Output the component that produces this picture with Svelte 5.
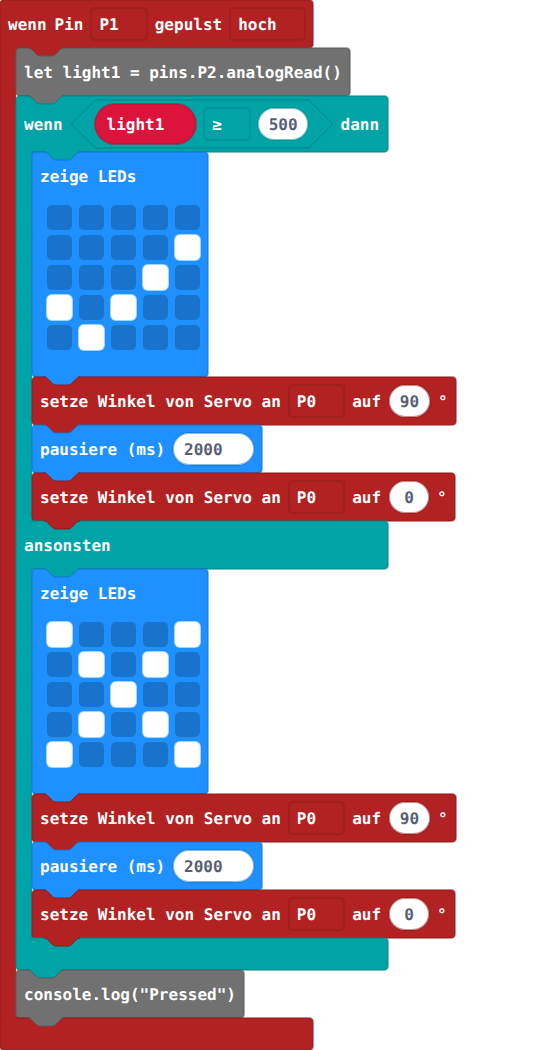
<script>
  const RED = 'red', TEAL = 'teal', BLUE = 'blue', GRAY = 'gray';

  const branch = (leds) => [
    { kind: 'leds', color: BLUE, leds },
    { kind: 'servo', color: RED, angle: '90' },
    { kind: 'pause', color: BLUE, ms: '2000' },
    { kind: 'servo', color: RED, angle: '0' }
  ];

  const yes = branch(['.....', '....#', '...#.', '#.#..', '.#...']);
  const no = branch(['#...#', '.#.#.', '..#..', '.#.#.', '#...#']);
</script>

{#snippet notch(above, own)}
  <svg class="notch above-{above} edge-{own}" width="36" height="9" viewBox="0 0 36 9" aria-hidden="true">
    <path class="cover" d="M2-1H34V1H2Z" />
    <path d="M0 0c2 0 3 1 4 2l4 4c1 1 2 2 4 2h12c2 0 3-1 4-2l4-4c1-1 2-2 4-2" />
  </svg>
{/snippet}

{#snippet stack(items, parent)}
  {#each items as b, i}
    <div class="block {b.color} {b.kind}">
      {@render notch(i ? items[i - 1].color : parent, b.color)}
      {#if b.kind === 'leds'}
        <span class="title">zeige LEDs</span>
        <div class="grid">
          {#each b.leds.join('') as cell}
            <i class:on={cell === '#'}></i>
          {/each}
        </div>
      {:else if b.kind === 'servo'}
        <span>setze Winkel von Servo an</span>
        <span class="field pin">P0</span>
        <span>auf</span>
        <span class="pill" class:single={b.angle.length === 1}>{b.angle}</span>
        <span>°</span>
      {:else}
        <span>pausiere (ms)</span>
        <span class="pill wide">{b.ms}</span>
      {/if}
    </div>
  {/each}
{/snippet}

<main>
  <section class="wrap">
    <div class="block red root head">
      <span>wenn</span>
      <span>Pin</span>
      <span class="field pin">P1</span>
      <span>gepulst</span>
      <span class="field level">hoch</span>
    </div>
    <div class="body red">
      <div class="spine"></div>
      <div class="inner">
        <div class="block gray">
          {@render notch(RED, GRAY)}
          <span>let light1 = pins.P2.analogRead()</span>
        </div>

        <section class="wrap">
          <div class="block teal cond head">
            {@render notch(GRAY, TEAL)}
            <span>wenn</span>
            <div class="hex">
              <svg width="262" height="48" viewBox="0 0 262 48" aria-hidden="true">
                <path d="M.4 24 24.4 0H237.7L261.7 24 237.7 48H24.4Z" />
              </svg>
              <span class="pill var">light1</span>
              <span class="field op">≥</span>
              <span class="pill">500</span>
            </div>
            <span>dann</span>
          </div>
          <div class="body teal">
            <div class="spine"></div>
            <div class="inner">{@render stack(yes, TEAL)}</div>
          </div>
          <div class="block teal mid">
            {@render notch(RED, RED)}
            <span>ansonsten</span>
          </div>
          <div class="body teal">
            <div class="spine"></div>
            <div class="inner">{@render stack(no, TEAL)}</div>
          </div>
          <div class="block teal foot">{@render notch(RED, RED)}</div>
        </section>

        <div class="block gray">
          {@render notch(TEAL, GRAY)}
          <span>console.log("Pressed")</span>
        </div>
      </div>
    </div>
    <div class="block red root foot">{@render notch(GRAY, GRAY)}</div>
  </section>
</main>

<style>
  :global(body) { margin: 0; background: #fff; }

  main {
    width: 560px;
    height: 1050px;
    overflow: hidden;
    color: #fff;
    font: bold 16px/20px "DejaVu Sans Mono", monospace;
    text-rendering: geometricPrecision;
    white-space: pre;
  }

  .red { --fill: #b22222; --line: #8e1b1b; --half: #8e1b1b80; }
  .teal { --fill: #00a4a6; --line: #008385; --half: #00838580; }
  .blue { --fill: #1e90ff; --line: #1873cc; --half: #1873cc80; }
  .gray { --fill: #717171; --line: #5a5a5a; --half: #5a5a5a80; }

  .wrap, .inner { display: flex; flex-direction: column; align-items: flex-start; }
  .body { display: flex; }

  .block {
    position: relative;
    display: flex;
    align-items: center;
    gap: 8px;
    box-sizing: border-box;
    height: 48px;
    padding: 0 8px;
    border-radius: 4px;
    background: var(--fill);
  }
  /* Edges are strokes centred on the outline: half outside, half inside. */
  .block, .field, .pill { box-shadow: 0 0 0 1px var(--half), inset 0 0 0 1px var(--half); }
  .block > span:not(.field, .pill, .title) { padding-top: 2px; }
  .head { border-bottom-left-radius: 0; }
  .root { width: 313px; }
  .cond { width: 372px; height: 56px; }
  .mid { width: 372px; border-top-left-radius: 0; border-bottom-left-radius: 0; }
  .foot { height: 32px; border-top-left-radius: 0; }
  .teal.foot { width: 372px; }

  .spine {
    position: relative;
    width: 16px;
    background: var(--fill);
    box-shadow: -1px 0 0 var(--half), inset 1px 0 0 var(--half);
  }
  .mid::before, .foot::before, .head::after, .mid::after {
    content: "";
    position: absolute;
    left: 1px;
    width: 14px;
    height: 2px;
    background: var(--fill);
  }
  .mid::before, .foot::before { top: -1px; }
  .head::after, .mid::after { bottom: -1px; }
  .inner {
    position: relative;
    background:
      linear-gradient(var(--fill), var(--fill)) 0 0 / 4px 4px no-repeat,
      linear-gradient(var(--fill), var(--fill)) 0 100% / 4px 4px no-repeat;
  }

  .notch { position: absolute; left: 12px; top: 0; z-index: 2; overflow: visible; }
  .mid .notch, .foot .notch { left: 28px; }
  .notch path { fill: var(--above); stroke: var(--edge); stroke-width: 1; }
  .notch .cover { stroke: none; }
  .above-red { --above: #b22222; }
  .above-teal { --above: #00a4a6; }
  .above-blue { --above: #1e90ff; }
  .above-gray { --above: #717171; }
  .edge-red { --edge: #8e1b1b; }
  .edge-teal { --edge: #008385; }
  .edge-blue { --edge: #1873cc; }
  .edge-gray { --edge: #5a5a5a; }

  .field, .pill { box-sizing: border-box; height: 32px; line-height: 34px; }
  .field { padding-left: 8px; border-radius: 4px; }
  .pin { width: 55.3px; }
  .level { width: 74.5px; }
  .op { width: 45.6px; }
  .pill { padding: 0 10.8px; border-radius: 16px; background: #fff; color: #575e75; }
  .single { width: 40px; padding: 0; text-align: center; }
  .wide { width: 80.4px; }
  .var {
    --half: #b0103080;
    width: 101.8px;
    height: 40px;
    padding-left: 12px;
    border-radius: 20px;
    background: #dc143c;
    color: #fff;
    line-height: 42px;
  }

  .hex { position: relative; display: flex; align-items: center; gap: 8px; box-sizing: border-box; width: 262px; height: 48px; padding-left: 24px; }
  .hex svg { position: absolute; left: 0; top: 0; overflow: visible; }
  .hex svg path { fill: none; stroke: var(--line); }
  .hex span { position: relative; }

  .leds { flex-direction: column; align-items: flex-start; gap: 18px; width: 176px; height: 225px; padding-top: 15px; }
  .grid { display: grid; grid-template-columns: repeat(5, 25px); grid-auto-rows: 25px; gap: 5px 7px; margin-left: 7px; }
  .grid i { border-radius: 5px; background: #1873cc; }
  .grid .on { background: #fff; box-shadow: 0 0 0 1px #a5d3ff; }
</style>
